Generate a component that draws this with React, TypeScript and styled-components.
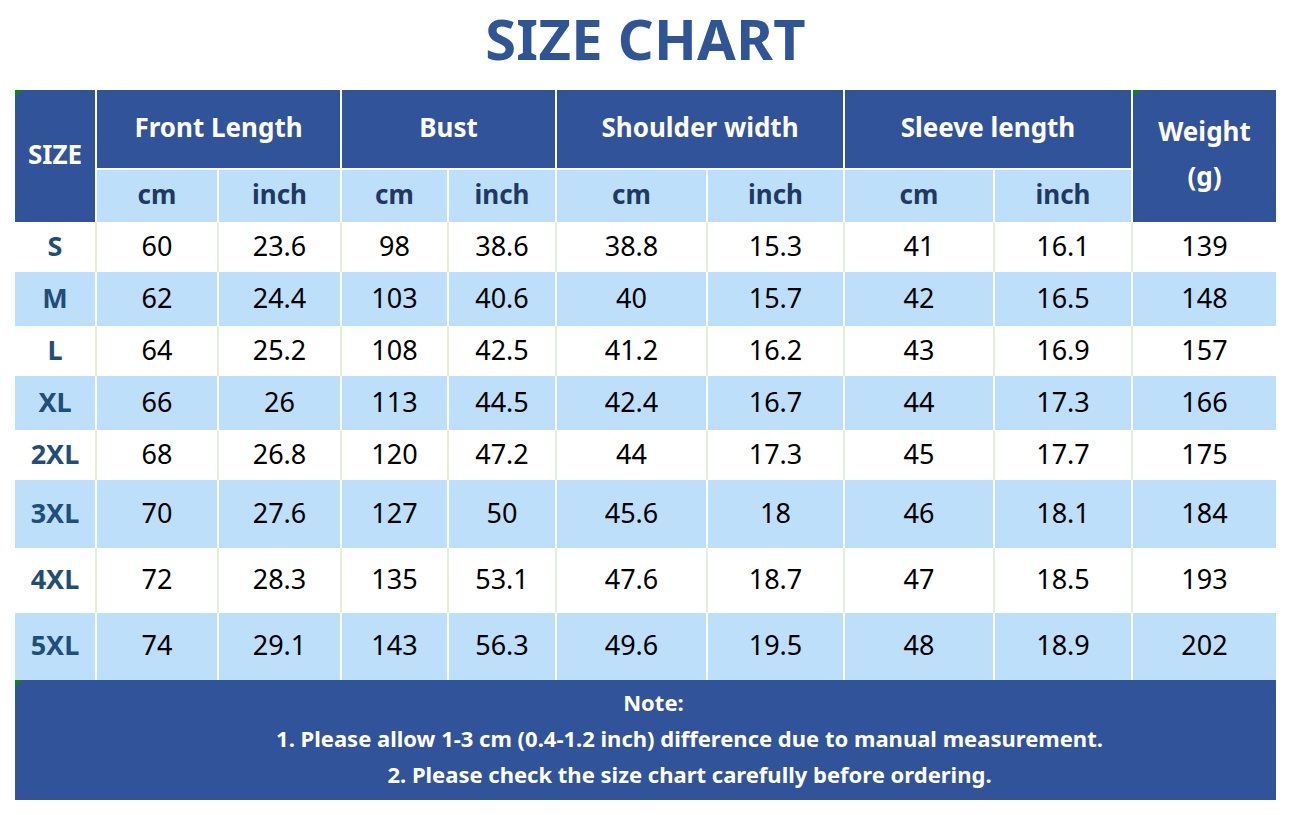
import React from 'react'
import styled, { createGlobalStyle } from 'styled-components'

const GlobalStyle = createGlobalStyle`
    html, body {
        margin: 0;
        padding: 0;
        background: #ffffff;
    }
    body {
        font-family: "Noto Sans", "Open Sans", Arial, sans-serif;
    }
`

const COLS = '80px 120px 121px 105px 106px 149px 135px 148px 136px 143px'
const BLUE = '#31539a'
const LIGHT = '#bddff9'
const SEP_GREEN = '#e2efda'

const StyledPage = styled.div`
    width: 1292px;
    height: 815px;
    display: flex;
    flex-direction: column;
    padding-left: 15px;
    box-sizing: border-box;
`

const StyledTitle = styled.h1`
    margin: 0;
    width: 1261px;
    height: 90px;
    display: flex;
    align-items: center;
    justify-content: center;
    font-size: 56px;
    font-weight: 700;
    color: #2f5597;
    letter-spacing: 0.3px;
    padding-bottom: 14px;
    box-sizing: border-box;
`

const StyledTable = styled.div`
    width: 1261px;
    display: flex;
    flex-direction: column;
`

const StyledHead = styled.div`
    position: relative;
    display: grid;
    grid-template-columns: ${COLS};
    grid-template-rows: 78px 52px;
    column-gap: 2px;
    row-gap: 2px;
    background: #ffffff;
`

const StyledHeadCell = styled.div<{ light?: boolean; col?: string; row?: string }>`
    background: ${props => props.light ? LIGHT : BLUE};
    color: ${props => props.light ? '#1f3864' : '#ffffff'};
    font-size: 26px;
    font-weight: 700;
    display: flex;
    align-items: center;
    justify-content: center;
    text-align: center;
    line-height: 45px;
    padding-bottom: 4px;
    box-sizing: border-box;
    ${props => props.col && `grid-column: ${props.col};`}
    ${props => props.row && `grid-row: ${props.row};`}
`

const StyledRow = styled.div<{ striped: boolean; h: number }>`
    display: grid;
    grid-template-columns: ${COLS};
    column-gap: 2px;
    height: ${props => props.h}px;
    background: ${props => props.striped ? '#ffffff' : SEP_GREEN};
`

const StyledCell = styled.div<{ striped: boolean; label?: boolean }>`
    background: ${props => props.striped ? LIGHT : '#ffffff'};
    display: flex;
    align-items: center;
    justify-content: center;
    font-size: 27px;
    font-weight: ${props => props.label ? 700 : 400};
    color: ${props => props.label ? '#1f4e79' : '#000000'};
    padding-bottom: 4px;
    box-sizing: border-box;
`

const StyledNote = styled.div`
    position: relative;
    height: 120px;
    background: ${BLUE};
    color: #ffffff;
    font-size: 22px;
    font-weight: 700;
    display: flex;
    flex-direction: column;
    align-items: center;
    padding-top: 4px;
    box-sizing: border-box;
`

const StyledNoteLine = styled.div<{ shift: number }>`
    line-height: 36px;
    padding-left: ${props => props.shift}px;
    white-space: nowrap;
`

const StyledMark = styled.span<{ left: number }>`
    position: absolute;
    top: 0;
    left: ${props => props.left}px;
    width: 0;
    height: 0;
    border-top: 7px solid #0a8a0a;
    border-right: 7px solid transparent;
`

type SizeRow = { size: string; values: string[]; h: number }

const rows: SizeRow[] = [
    { size: 'S', values: ['60', '23.6', '98', '38.6', '38.8', '15.3', '41', '16.1', '139'], h: 50 },
    { size: 'M', values: ['62', '24.4', '103', '40.6', '40', '15.7', '42', '16.5', '148'], h: 54 },
    { size: 'L', values: ['64', '25.2', '108', '42.5', '41.2', '16.2', '43', '16.9', '157'], h: 50 },
    { size: 'XL', values: ['66', '26', '113', '44.5', '42.4', '16.7', '44', '17.3', '166'], h: 54 },
    { size: '2XL', values: ['68', '26.8', '120', '47.2', '44', '17.3', '45', '17.7', '175'], h: 50 },
    { size: '3XL', values: ['70', '27.6', '127', '50', '45.6', '18', '46', '18.1', '184'], h: 68 },
    { size: '4XL', values: ['72', '28.3', '135', '53.1', '47.6', '18.7', '47', '18.5', '193'], h: 65 },
    { size: '5XL', values: ['74', '29.1', '143', '56.3', '49.6', '19.5', '48', '18.9', '202'], h: 67 },
]

const groups = [
    { name: 'Front Length', col: '2 / 4' },
    { name: 'Bust', col: '4 / 6' },
    { name: 'Shoulder width', col: '6 / 8' },
    { name: 'Sleeve length', col: '8 / 10' },
]

const App = () => {
    return (<>
        <GlobalStyle />
        <StyledPage>
            <StyledTitle>SIZE CHART</StyledTitle>
            <StyledTable>
                <StyledHead>
                    <StyledHeadCell col="1" row="1 / 3">SIZE</StyledHeadCell>
                    {groups.map(g => (
                        <StyledHeadCell key={g.name} col={g.col} row="1">{g.name}</StyledHeadCell>
                    ))}
                    <StyledHeadCell col="10" row="1 / 3">Weight<br />(g)</StyledHeadCell>
                    {groups.map(g => (
                        <React.Fragment key={g.name + '-units'}>
                            <StyledHeadCell light row="2">cm</StyledHeadCell>
                            <StyledHeadCell light row="2">inch</StyledHeadCell>
                        </React.Fragment>
                    ))}
                    <StyledMark left={0} />
                    <StyledMark left={1118} />
                </StyledHead>

                {rows.map((r, i) => {
                    const striped = i % 2 === 1
                    return (
                        <StyledRow key={r.size} striped={striped} h={r.h}>
                            <StyledCell striped={striped} label>{r.size}</StyledCell>
                            {r.values.map((v, j) => (
                                <StyledCell key={j} striped={striped}>{v}</StyledCell>
                            ))}
                        </StyledRow>
                    )
                })}

                <StyledNote>
                    <StyledNoteLine shift={16}>Note:</StyledNoteLine>
                    <StyledNoteLine shift={88}>1. Please allow 1-3 cm (0.4-1.2 inch) difference due to manual measurement.</StyledNoteLine>
                    <StyledNoteLine shift={88}>2. Please check the size chart carefully before ordering.</StyledNoteLine>
                    <StyledMark left={0} />
                </StyledNote>
            </StyledTable>
        </StyledPage>
    </>)
}

export default App
